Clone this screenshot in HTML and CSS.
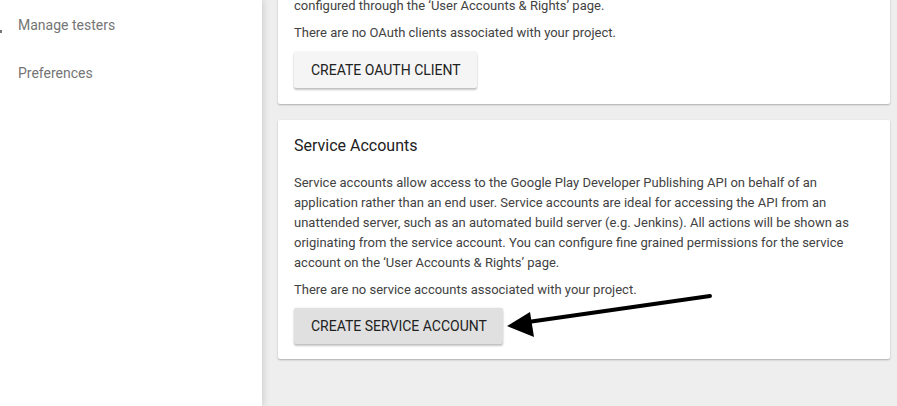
FILE: index.html
```html
<!DOCTYPE html>
<html>
<head>
<meta charset="utf-8">
<link rel="stylesheet" href="styles.css">
</head>
<body>
<div class="layout">
  <nav class="sidebar">
    <span class="cut-icon"></span>
    <a class="nav-item">Manage testers</a>
    <a class="nav-item">Preferences</a>
  </nav>
  <main class="main">
    <section class="card card-oauth">
      <p class="text">configured through the ‘User Accounts &amp; Rights’ page.</p>
      <p class="text">There are no OAuth clients associated with your project.</p>
      <button class="btn btn-light">CREATE OAUTH CLIENT</button>
    </section>
    <section class="card card-service">
      <h2 class="card-title">Service Accounts</h2>
      <p class="text">Service accounts allow access to the Google Play Developer Publishing API on behalf of an application rather than an end user. Service accounts are ideal for accessing the API from an unattended server, such as an automated build server (e.g. Jenkins). All actions will be shown as originating from the service account. You can configure fine grained permissions for the service account on the ‘User Accounts &amp; Rights’ page.</p>
      <p class="text">There are no service accounts associated with your project.</p>
      <button class="btn btn-dark">CREATE SERVICE ACCOUNT</button>
    </section>
  </main>
</div>
<svg class="arrow" width="897" height="406" viewBox="0 0 897 406">
  <line x1="710" y1="296" x2="528" y2="322" stroke="#000" stroke-width="4" stroke-linecap="round"/>
  <polygon points="507,326 530,312 534,337" fill="#000"/>
</svg>
</body>
</html>
```
FILE: styles.css
```css
html, body {
  margin: 0;
  padding: 0;
  height: 100%;
  overflow: hidden;
  font-family: Roboto, "Liberation Sans", sans-serif;
}
.layout {
  display: flex;
  height: 406px;
  background: #eeeeee;
}
.sidebar {
  width: 262px;
  flex: none;
  background: #fff;
  box-shadow: 2px 0 6px rgba(0,0,0,0.12);
  position: relative;
  z-index: 1;
  display: flex;
  flex-direction: column;
  padding-top: 16px;
}
.cut-icon {
  position: absolute;
  left: 0;
  top: 30px;
  width: 2px;
  height: 3px;
  background: #777;
}
.nav-item {
  display: block;
  padding-left: 18px;
  font-size: 14px;
  line-height: 18px;
  color: #757575;
  margin-bottom: 30px;
}
.main {
  flex: 1;
  padding: 0 7px 0 16px;
  display: flex;
  flex-direction: column;
  gap: 16px;
}
.card {
  background: #fff;
  border-radius: 2px;
  box-shadow: 0 1px 2px rgba(0,0,0,0.28);
  padding: 16px 16px 15px;
}
.card-oauth {
  margin-top: -19px;
  padding-top: 15px;
  padding-bottom: 16px;
}
.card-title {
  margin: 0 0 17px;
  font-size: 16px;
  font-weight: 400;
  line-height: 20px;
  color: #212121;
}
.text {
  margin: 0 0 7px;
  font-size: 13px;
  line-height: 20px;
  color: #424242;
}
.btn {
  display: block;
  margin-top: 9px;
  height: 36px;
  padding: 0 16px 0 17px;
  border: none;
  border-radius: 2px;
  font-family: Roboto, "Liberation Sans", sans-serif;
  font-size: 14px;
  font-weight: 400;
  color: #212121;
  box-shadow: 0 2px 2px rgba(0,0,0,0.22), 0 0 2px rgba(0,0,0,0.12);
}
.card-service .btn { margin-top: 8px; }
.btn-light { background: #f5f5f5; }
.btn-dark { background: #e0e0e0; }
.arrow {
  position: absolute;
  left: 0;
  top: 0;
  z-index: 2;
  pointer-events: none;
}
```
